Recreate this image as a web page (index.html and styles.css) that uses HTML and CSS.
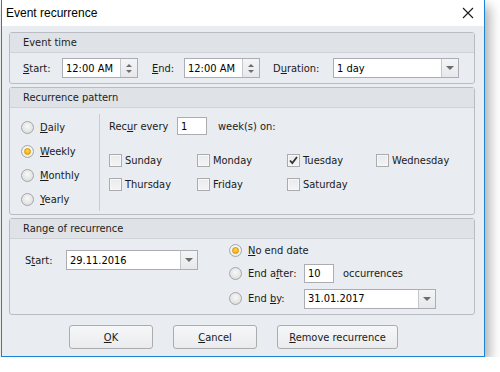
FILE: index.html
```html
<!DOCTYPE html>
<html lang="en">
<head>
    <meta charset="UTF-8">
    <title>Event recurrence</title>
    <link rel="stylesheet" href="styles.css">
</head>
<body>
    <div class="window">
        <div class="titlebar">
            <span class="title">Event recurrence</span>
            <svg class="close" width="12" height="12" viewBox="0 0 12 12">
                <path d="M1 1 L11 11 M11 1 L1 11" stroke="#1a1a1a" stroke-width="1.1" fill="none"/>
            </svg>
        </div>

        <div class="group">
            <div class="group-header">Event time</div>
            <div class="group-body time-row">
                <span class="lbl lbl-start"><u>S</u>tart:</span>
                <div class="edit spin">
                    <span class="edit-text">12:00 AM</span>
                    <span class="spin-btn"><i class="up"></i><i class="down"></i></span>
                </div>
                <span class="lbl lbl-end"><u>E</u>nd:</span>
                <div class="edit spin">
                    <span class="edit-text">12:00 AM</span>
                    <span class="spin-btn"><i class="up"></i><i class="down"></i></span>
                </div>
                <span class="lbl lbl-dur">D<u>u</u>ration:</span>
                <div class="edit combo combo-dur">
                    <span class="edit-text">1 day</span>
                    <span class="drop-btn"><i class="down"></i></span>
                </div>
            </div>
        </div>

        <div class="group">
            <div class="group-header">Recurrence pattern</div>
            <div class="group-body pattern">
                <div class="freq">
                    <div class="radio-row"><span class="radio"></span><span><u>D</u>aily</span></div>
                    <div class="radio-row"><span class="radio checked"></span><span><u>W</u>eekly</span></div>
                    <div class="radio-row"><span class="radio"></span><span><u>M</u>onthly</span></div>
                    <div class="radio-row"><span class="radio"></span><span><u>Y</u>early</span></div>
                </div>
                <div class="weekly">
                    <div class="recur-row">
                        <span class="lbl-recur">Rec<u>u</u>r every</span>
                        <div class="edit small"><span class="edit-text">1</span></div>
                        <span>week(s) on:</span>
                    </div>
                    <div class="days">
                        <div class="check-row"><span class="check"></span>Sunday</div>
                        <div class="check-row"><span class="check"></span>Monday</div>
                        <div class="check-row"><span class="check checked">
                            <svg width="11" height="11" viewBox="0 0 11 11"><path d="M2 5.5 L4.3 8 L9 2" stroke="#333" stroke-width="1.8" fill="none"/></svg>
                        </span>Tuesday</div>
                        <div class="check-row"><span class="check"></span>Wednesday</div>
                        <div class="check-row"><span class="check"></span>Thursday</div>
                        <div class="check-row"><span class="check"></span>Friday</div>
                        <div class="check-row"><span class="check"></span>Saturday</div>
                    </div>
                </div>
            </div>
        </div>

        <div class="group">
            <div class="group-header">Range of recurrence</div>
            <div class="group-body range">
                <div class="range-start">
                    <span class="lbl lbl-rstart">S<u>t</u>art:</span>
                    <div class="edit combo combo-date">
                        <span class="edit-text">29.11.2016</span>
                        <span class="drop-btn"><i class="down"></i></span>
                    </div>
                </div>
                <div class="range-end">
                    <div class="radio-row end-row"><span class="radio checked"></span><span><u>N</u>o end date</span></div>
                    <div class="radio-row end-row">
                        <span class="radio"></span><span class="end-lbl">End a<u>f</u>ter:</span>
                        <div class="edit small"><span class="edit-text">10</span></div>
                        <span class="occ">occurrences</span>
                    </div>
                    <div class="radio-row end-row">
                        <span class="radio"></span><span class="end-lbl">End <u>b</u>y:</span>
                        <div class="edit combo combo-date">
                            <span class="edit-text">31.01.2017</span>
                            <span class="drop-btn"><i class="down"></i></span>
                        </div>
                    </div>
                </div>
            </div>
        </div>

        <div class="buttons">
            <button class="btn btn-ok"><u>O</u>K</button>
            <button class="btn btn-cancel"><u>C</u>ancel</button>
            <button class="btn btn-remove"><u>R</u>emove recurrence</button>
        </div>
    </div>
</body>
</html>
```

FILE: styles.css
```css
body {
    margin: 0;
    padding: 0;
    background-color: #ffffff;
    font-family: "DejaVu Sans Condensed", "Liberation Sans", sans-serif;
    font-size: 11px;
    color: #1a1a1a;
}
u {
    text-decoration: underline;
    text-underline-offset: 1px;
}
.window {
    margin-left: 1px;
    width: 482px;
    height: 356px;
    border: 1px solid #1883d7;
    border-top: none;
    background-color: #e9ecf0;
    box-shadow: 4px 6px 12px rgba(0, 0, 0, 0.35);
    display: flex;
    flex-direction: column;
}
.titlebar {
    height: 26px;
    background-color: #ffffff;
    display: flex;
    align-items: center;
    justify-content: space-between;
    padding: 0 10px 0 4px;
}
.title {
    font-family: "Liberation Sans", sans-serif;
    font-size: 12px;
    color: #000;
}
.close {
    margin-top: 0;
}
.group {
    margin: 6px 9px 0 7px;
    border: 1px solid #b9bdc3;
    border-radius: 3px;
    background-color: #e9ecf0;
}
.group + .group {
    margin-top: 3px;
}
.group-header {
    height: 19px;
    line-height: 19px;
    padding-left: 13px;
    background-color: #dfe2e7;
    border-bottom: 1px solid #cfd3d8;
    color: #222;
}

/* edits */
.edit {
    height: 18px;
    border: 1px solid #abadb3;
    background-color: #ffffff;
    display: flex;
    align-items: center;
    box-sizing: border-box;
}
.edit-text {
    flex: 1;
    padding-left: 3px;
    color: #000;
}
.spin {
    width: 76px;
    height: 20px;
}
.spin-btn, .drop-btn {
    width: 16px;
    height: 100%;
    border-left: 1px solid #c4c7cc;
    background: linear-gradient(#f4f5f7, #e6e8eb);
    display: flex;
    flex-direction: column;
    align-items: center;
    justify-content: center;
    gap: 3px;
}
.up, .down {
    width: 0;
    height: 0;
    border-left: 3px solid transparent;
    border-right: 3px solid transparent;
}
.up {
    border-bottom: 3px solid #6d6d6d;
}
.down {
    border-top: 3px solid #6d6d6d;
}
.drop-btn .down {
    border-left-width: 4px;
    border-right-width: 4px;
    border-top-width: 4px;
}
.combo {
    height: 20px;
}

/* event time */
.time-row {
    height: 30px;
    display: flex;
    align-items: center;
    padding-left: 13px;
}
.lbl-start {
    width: 39px;
}
.lbl-end {
    margin-left: 14px;
    width: 32px;
}
.lbl-dur {
    margin-left: 13px;
    width: 60px;
}
.combo-dur {
    width: 126px;
}

/* pattern */
.pattern {
    height: 106px;
    display: flex;
}
.freq {
    width: 90px;
    padding: 8px 0 0 11px;
    box-sizing: border-box;
    border-right: 1px solid #c9cdd2;
    margin: 6px 0 3px 0;
    padding-top: 1px;
}
.radio-row {
    height: 24px;
    display: flex;
    align-items: center;
}
.radio {
    width: 13px;
    height: 13px;
    box-sizing: border-box;
    border-radius: 50%;
    border: 1px solid #a3a6aa;
    background: radial-gradient(circle at 50% 40%, #f8f8f8, #d6d7d9);
    margin-right: 6px;
    display: flex;
    align-items: center;
    justify-content: center;
}
.radio.checked {
    background: radial-gradient(circle at 50% 40%, #ffffff, #e4e4e4);
}
.radio.checked::after {
    content: "";
    width: 7px;
    height: 7px;
    box-sizing: border-box;
    border-radius: 50%;
    background: radial-gradient(circle at 50% 35%, #ffd84a, #f0a800);
    border: 1px solid #d89500;
}
.weekly {
    padding: 9px 0 0 9px;
}
.recur-row {
    height: 18px;
    display: flex;
    align-items: center;
}
.lbl-recur {
    width: 68px;
}
.edit.small {
    width: 30px;
    margin-right: 11px;
}
.days {
    margin-top: 13px;
    display: grid;
    grid-template-columns: 88px 90px 89px 80px;
    grid-auto-rows: 24px;
}
.check-row {
    display: flex;
    align-items: center;
}
.check {
    width: 13px;
    height: 13px;
    box-sizing: border-box;
    border: 1px solid #a9abae;
    background: linear-gradient(#e9eaec, #f4f4f5);
    box-shadow: inset 0 0 0 1px #f7f7f7;
    margin-right: 3px;
    display: flex;
    align-items: center;
    justify-content: center;
}
.check svg {
    display: block;
}

/* range */
.range {
    height: 75px;
    display: flex;
}
.range-start {
    display: flex;
    align-items: center;
    height: 20px;
    margin: 11px 0 0 15px;
}
.lbl-rstart {
    width: 41px;
}
.combo-date {
    width: 132px;
}
.range-end {
    margin-left: 31px;
    padding-top: 0;
}
.end-row {
    height: 25px;
}
.end-row:first-child {
    height: 22px;
}
.end-lbl {
    width: 56px;
}
.end-row .edit.small {
    height: 19px;
}
.occ {
    margin-left: -2px;
}
.end-row .combo-date {
    height: 20px;
}

/* buttons */
.buttons {
    display: flex;
    gap: 20px;
    padding-left: 67px;
    margin-top: 10px;
}
.btn {
    height: 24px;
    border: 1px solid #acacac;
    border-radius: 3px;
    background: linear-gradient(#f6f7f9, #e9ebee);
    font-family: inherit;
    font-size: 11px;
    color: #1a1a1a;
    padding: 0;
}
.btn-ok, .btn-cancel {
    width: 84px;
}
.btn-remove {
    width: 121px;
}
```
